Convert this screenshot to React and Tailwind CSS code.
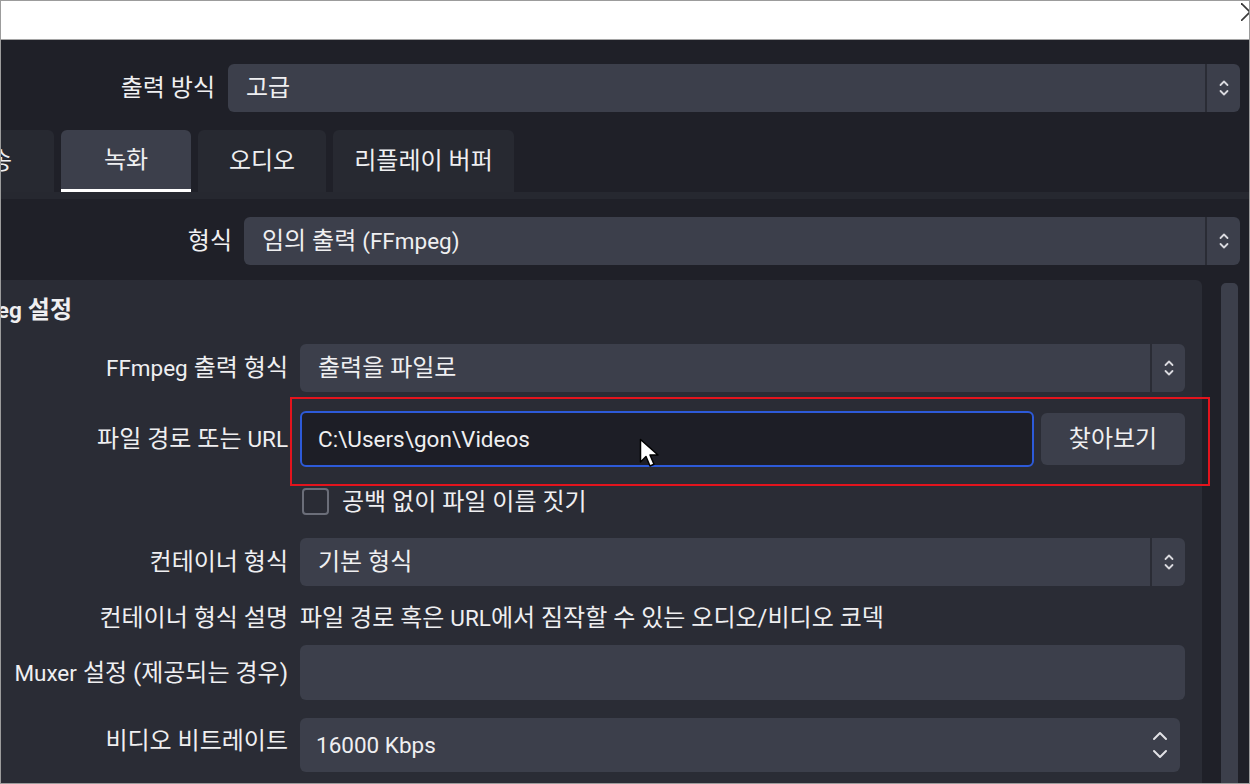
import React from "react";

function L({ children }) {
  return <span className="text-[22.5px]">{children}</span>;
}

function UpDown() {
  return (
    <svg width="12" height="20" viewBox="0 0 12 20" fill="none" stroke="#d9d9de" strokeWidth="1.8" strokeLinecap="round" strokeLinejoin="round">
      <path d="M2.5 7 L6 3.5 L9.5 7" />
      <path d="M2.5 13 L6 16.5 L9.5 13" />
    </svg>
  );
}

function Select({ value, className = "" }) {
  return (
    <div className={`flex h-[48px] rounded-[6px] bg-[#3c3f4b] ${className}`}>
      <div className="flex flex-1 items-center pl-[18px] whitespace-pre">{value}</div>
      <div className="w-[2px] bg-[#2a2c35]" />
      <div className="flex w-[33px] items-center justify-center">
        <UpDown />
      </div>
    </div>
  );
}

function Label({ children, className = "" }) {
  return <div className={`w-[287px] shrink-0 text-right whitespace-nowrap ${className}`}>{children}</div>;
}

export default function App() {
  return (
    <div className="relative flex h-[784px] w-[1250px] flex-col overflow-hidden border border-[#9c9c9c] bg-[#1f2028] font-['Roboto','Noto_Sans_CJK_KR',sans-serif] text-[24px] leading-none text-[#efeff1]">
      {/* top white strip */}
      <div className="relative h-[39px] shrink-0 border-b border-[#a5a5a5] bg-white">
        <svg className="absolute left-[1240px] top-[2px]" width="18" height="18" viewBox="0 0 18 18" stroke="#3a3a3a" strokeWidth="1.6">
          <path d="M0 0 L18 18" />
          <path d="M0 18 L18 0" />
        </svg>
      </div>

      <div className="flex min-h-0 flex-1 flex-col">
        {/* 출력 방식 */}
        <div className="mt-[24px] flex items-center pr-[9px]">
          <div className="w-[214px] shrink-0 text-right">출력 방식</div>
          <Select value="고급" className="ml-[13px] flex-1" />
        </div>

        {/* tabs */}
        <div className="mt-[18px] flex h-[62px] items-stretch gap-[7px]">
          <div className="ml-[-75px] flex w-[128px] items-center justify-center rounded-t-[6px] bg-[#272931]">방송</div>
          <div className="flex w-[130px] items-center justify-center rounded-t-[6px] border-b-[3px] border-white bg-[#3c3f4b] pt-[1px]">녹화</div>
          <div className="flex w-[128px] items-center justify-center rounded-t-[6px] bg-[#272931]">오디오</div>
          <div className="flex w-[181px] items-center justify-center rounded-t-[6px] bg-[#272931]">리플레이 버퍼</div>
        </div>
        <div className="h-[7px] bg-[#262830]" />

        {/* 형식 */}
        <div className="mt-[18px] flex items-center pr-[9px]">
          <div className="w-[231px] shrink-0 text-right">형식</div>
          <Select value={<>임의 출력 <L>(FFmpeg)</L></>} className="ml-[12px] flex-1" />
        </div>

        {/* body */}
        <div className="mt-[15px] flex min-h-0 flex-1">
          <div className="w-[1201px] shrink-0 overflow-hidden rounded-tr-[6px] bg-[#2a2c35] pr-[17px]">
            <div className="mt-[15px] flex h-[30px] items-center">
              <div className="ml-[-61px] font-bold whitespace-nowrap"><L>FFmpeg</L> 설정</div>
            </div>

            <div className="mt-[19px] flex items-center">
              <Label><L>FFmpeg</L> 출력 형식</Label>
              <Select value="출력을 파일로" className="ml-[12px] flex-1" />
            </div>

            <div className="mt-[19px] flex items-center">
              <Label>파일 경로 또는 <L>URL</L></Label>
              <div className="ml-[12px] flex h-[56px] w-[734px] items-center rounded-[6px] border-2 border-[#2d5ad8] bg-[#1d1e26] pl-[16px]">
                <L>C:\Users\gon\Videos</L>
              </div>
              <div className="ml-[7px] flex h-[52px] flex-1 items-center justify-center rounded-[6px] bg-[#3c3f4b]">찾아보기</div>
            </div>

            <div className="mt-[21px] flex h-[27px] items-center">
              <div className="w-[287px] shrink-0" />
              <div className="ml-[14px] h-[27px] w-[27px] rounded-[4px] border-2 border-[#6b6e79]" />
              <div className="ml-[13px]">공백 없이 파일 이름 짓기</div>
            </div>

            <div className="mt-[23px] flex items-center">
              <Label>컨테이너 형식</Label>
              <Select value="기본 형식" className="ml-[12px] flex-1" />
            </div>

            <div className="mt-[17px] flex h-[30px] items-center">
              <Label>컨테이너 형식 설명</Label>
              <div className="ml-[12px] whitespace-nowrap">파일 경로 혹은 <L>URL</L>에서 짐작할 수 있는 오디오/비디오 코덱</div>
            </div>

            <div className="mt-[12px] flex items-center">
              <Label><L>Muxer</L> 설정 (제공되는 경우)</Label>
              <div className="ml-[12px] h-[55px] flex-1 rounded-[6px] bg-[#3c3f4b]" />
            </div>

            <div className="mt-[18px] flex items-center">
              <Label className="mb-[8px]">비디오 비트레이트</Label>
              <div className="ml-[12px] flex h-[54px] w-[880px] items-center rounded-[6px] bg-[#3c3f4b] pl-[16px] pr-[12px]">
                <div className="flex-1"><L>16000 Kbps</L></div>
                <div className="flex flex-col items-center gap-[8px]">
                  <svg width="16" height="10" viewBox="0 0 16 10" fill="none" stroke="#e2e2e6" strokeWidth="2" strokeLinecap="round" strokeLinejoin="round">
                    <path d="M2 8 L8 2 L14 8" />
                  </svg>
                  <svg width="16" height="10" viewBox="0 0 16 10" fill="none" stroke="#e2e2e6" strokeWidth="2" strokeLinecap="round" strokeLinejoin="round">
                    <path d="M2 2 L8 8 L14 2" />
                  </svg>
                </div>
              </div>
            </div>
          </div>

          {/* scrollbar */}
          <div className="ml-[19px] mt-[3px] w-[17px] rounded-t-[5px] bg-[#3c3f4b]" />
        </div>
      </div>

      {/* red annotation box */}
      <div className="absolute left-[289px] top-[396px] h-[89px] w-[920px] border-2 border-[#e3141d]" />

      {/* mouse cursor */}
      <svg className="absolute left-[638px] top-[437px]" width="22" height="32" viewBox="0 0 22 32">
        <path d="M1.5 1.5 L1.5 24 L7 18.5 L11 28 L15 26.3 L11 17 L19 17 Z" fill="#ffffff" stroke="#000000" strokeWidth="1.5" strokeLinejoin="round" />
      </svg>
    </div>
  );
}
